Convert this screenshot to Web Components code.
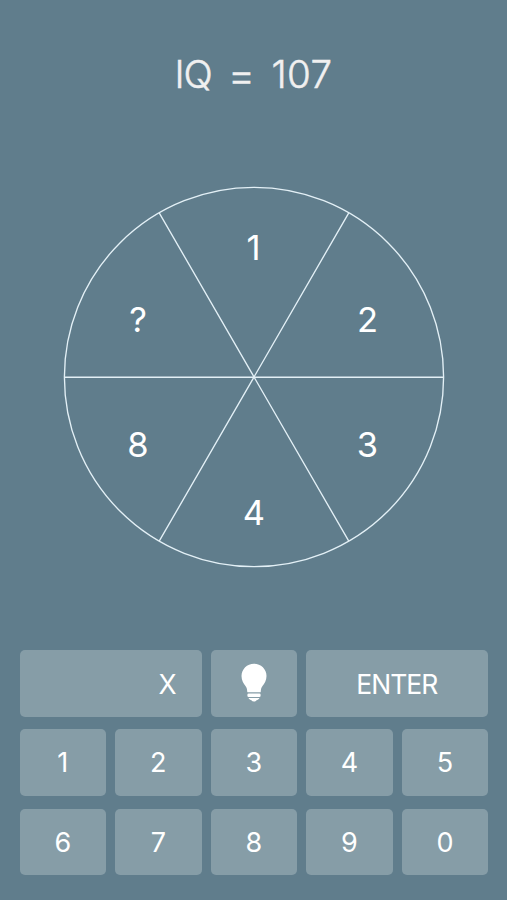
<!DOCTYPE html>
<html lang="en">
<head>
<meta charset="utf-8">
<title>IQ puzzle</title>
<style>
html,body{margin:0;height:100%;background:#607d8c}
</style>
</head>
<body>
<iq-app></iq-app>
<script>
const define = (name, html) => {
  const t = document.createElement('template');
  t.innerHTML = html;
  customElements.define(name, class extends HTMLElement {
    constructor() {
      super();
      this.attachShadow({ mode: 'open' }).append(t.content.cloneNode(true));
    }
  });
};

define('iq-title', `
<style>
:host{display:block;box-sizing:border-box;height:187px;padding-top:50px;text-align:center;
font-size:38.5px;line-height:48px;font-weight:300;color:#f0f0f0;word-spacing:5.500px;white-space:nowrap;
-webkit-text-stroke:.5px #f0f0f0}
::slotted(b){font-weight:300;letter-spacing:-1.200px}
::slotted(i){font-style:normal;font-size:42px;line-height:1;vertical-align:-2px}
::slotted(span){letter-spacing:.4px}
</style>
<slot></slot>`);

define('iq-wheel', `
<style>
:host{display:block;height:463px}
svg{display:block;margin:0 auto;overflow:visible}
.lines{fill:none;stroke:#e3f0f6;stroke-width:1.35}
text{fill:#fff;font-size:34.5px;text-anchor:middle}
</style>
<svg width="380" height="380" viewBox="-190 -190 380 380">
  <g class="lines">
    <circle r="189.6"/>
    <path d="M-189.6 .2H189.6M-94.8 -164.2L94.8 164.2M94.8 -164.2L-94.8 164.2"/>
  </g>
  <text x="-.5" y="-117.5">1</text>
  <text x="113.5" y="-45.3">2</text>
  <text x="113.5" y="79.7">3</text>
  <text x="0" y="148">4</text>
  <text x="-116" y="79.7">8</text>
  <text x="-116" y="-45.3">?</text>
</svg>`);

define('iq-key', `
<style>
:host{display:flex;align-items:center;justify-content:center;box-sizing:border-box;min-width:0;
background:#869da7;border-radius:5px;color:#fff;font-size:27px;line-height:32px;padding-top:1.500px}
:host([wide]){grid-column:span 2;font-size:26.5px;letter-spacing:-1px;padding-top:.5px;padding-right:1px}
:host([readout]){justify-content:flex-end;padding-right:26px}
:host([icon]){padding-top:0;padding-bottom:1.500px}
</style>
<slot></slot>`);

define('iq-bulb', `
<style>:host{display:block;width:26px;height:39px}svg{display:block}</style>
<svg width="26" height="39" viewBox="0 0 26 39" fill="#fff">
  <path d="M13 0.7C6 .7 .5 6.200 .5 13c0 4.500 2 7.300 4 10 1.200 1.700 1.700 3.500 1.700 5.400Q6.200 29.300 7.200 29.300H18.800Q19.800 29.300 19.800 28.400c0-1.900.5-3.700 1.700-5.400 2-2.700 4-5.500 4-10C25.500 6.200 20 .7 13 .7z"/>
  <rect x="6.400" y="30.500" width="13.200" height="3.400" rx="1.200"/>
  <path d="M7.500 35H18.500C17.700 36.500 16.500 37 15.600 37.300Q14.800 38.500 13 38.500T10.400 37.300C9.500 37 8.300 36.500 7.500 35z"/>
</svg>`);

define('iq-keypad', `
<style>
:host{display:grid;grid-template-columns:repeat(5,1fr);grid-auto-rows:66.6px;gap:12.800px 9px;
padding:0 18.700px 0 19.500px}
</style>
<slot></slot>`);

define('iq-app', `
<style>
:host{display:block;height:900px;overflow:hidden;background:#607d8c;
font-family:Inter,"Liberation Sans",sans-serif}
iq-wheel{padding-left:1px}
</style>
<iq-title><b>IQ</b> <i>=</i> <span>107</span></iq-title>
<iq-wheel></iq-wheel>
<iq-keypad>
  <iq-key wide readout>X</iq-key>
  <iq-key icon><iq-bulb></iq-bulb></iq-key>
  <iq-key wide>ENTER</iq-key>
  <iq-key>1</iq-key><iq-key>2</iq-key><iq-key>3</iq-key><iq-key>4</iq-key><iq-key>5</iq-key>
  <iq-key>6</iq-key><iq-key>7</iq-key><iq-key>8</iq-key><iq-key>9</iq-key><iq-key>0</iq-key>
</iq-keypad>`);
</script>
</body>
</html>
